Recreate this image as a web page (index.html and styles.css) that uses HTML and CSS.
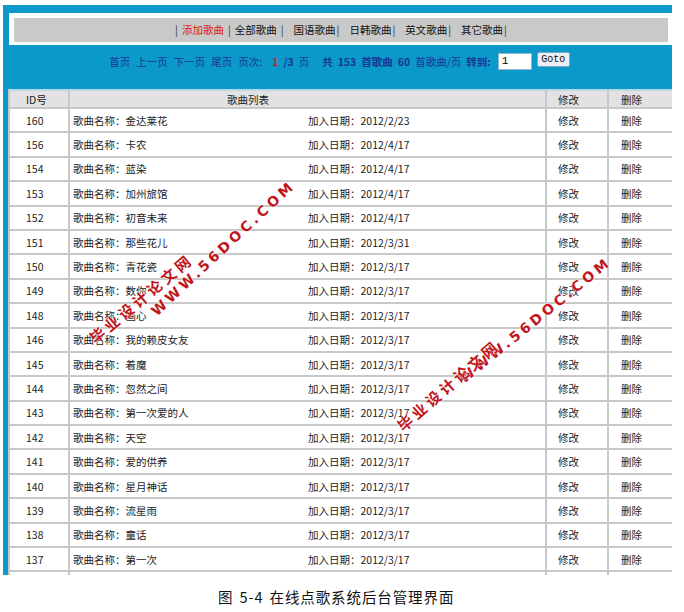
FILE: index.html
```html
<!DOCTYPE html>
<html lang="zh-CN">
<head>
<meta charset="utf-8">
<title>在线点歌系统后台管理界面</title>
<link rel="stylesheet" href="styles.css">
</head>
<body>
<div class="page">
  <div class="panel">
    <div class="topband">
      <div class="nav">
        <span class="bar">|</span><a class="item hot">添加歌曲</a><span class="bar">|</span><a class="item">全部歌曲</a><span class="bar">|</span><a class="item wide">国语歌曲</a><span class="bar">|</span><a class="item wide">日韩歌曲</a><span class="bar">|</span><a class="item wide">英文歌曲</a><span class="bar">|</span><a class="item wide">其它歌曲</a><span class="bar">|</span>
      </div>
    </div>
    <div class="pager">
      <span class="lnk">首页</span>
      <span class="lnk">上一页</span>
      <span class="lnk">下一页</span>
      <span class="lnk">尾页</span>
      <span class="lnk">页次:</span>
      <b class="red">1</b>
      <b class="tight">/3</b>
      <span class="tight">页</span>
      <b class="gap">共</b>
      <b>153</b>
      <b>首歌曲</b>
      <b>60</b>
      <span>首歌曲/页</span>
      <b>转到:</b>
      <span class="inp">1</span>
      <span class="btn">Goto</span>
    </div>
    <table class="songs">
      <colgroup><col class="c-id"><col class="c-song"><col class="c-edit"><col class="c-del"></colgroup>
      <tr class="head"><td class="id">ID号</td><td class="hsong">歌曲列表</td><td class="op">修改</td><td class="op2">删除</td></tr>
      <tr><td class="id">160</td><td><div class="song"><span class="name">歌曲名称：金达莱花</span><span class="date">加入日期：2012/2/23</span></div></td><td class="op">修改</td><td class="op2">删除</td></tr>
      <tr><td class="id">156</td><td><div class="song"><span class="name">歌曲名称：卡农</span><span class="date">加入日期：2012/4/17</span></div></td><td class="op">修改</td><td class="op2">删除</td></tr>
      <tr><td class="id">154</td><td><div class="song"><span class="name">歌曲名称：蓝染</span><span class="date">加入日期：2012/4/17</span></div></td><td class="op">修改</td><td class="op2">删除</td></tr>
      <tr><td class="id">153</td><td><div class="song"><span class="name">歌曲名称：加州旅馆</span><span class="date">加入日期：2012/4/17</span></div></td><td class="op">修改</td><td class="op2">删除</td></tr>
      <tr><td class="id">152</td><td><div class="song"><span class="name">歌曲名称：初音未来</span><span class="date">加入日期：2012/4/17</span></div></td><td class="op">修改</td><td class="op2">删除</td></tr>
      <tr><td class="id">151</td><td><div class="song"><span class="name">歌曲名称：那些花儿</span><span class="date">加入日期：2012/3/31</span></div></td><td class="op">修改</td><td class="op2">删除</td></tr>
      <tr><td class="id">150</td><td><div class="song"><span class="name">歌曲名称：青花瓷</span><span class="date">加入日期：2012/3/17</span></div></td><td class="op">修改</td><td class="op2">删除</td></tr>
      <tr><td class="id">149</td><td><div class="song"><span class="name">歌曲名称：数你</span><span class="date">加入日期：2012/3/17</span></div></td><td class="op">修改</td><td class="op2">删除</td></tr>
      <tr><td class="id">148</td><td><div class="song"><span class="name">歌曲名称：画心</span><span class="date">加入日期：2012/3/17</span></div></td><td class="op">修改</td><td class="op2">删除</td></tr>
      <tr><td class="id">146</td><td><div class="song"><span class="name">歌曲名称：我的赖皮女友</span><span class="date">加入日期：2012/3/17</span></div></td><td class="op">修改</td><td class="op2">删除</td></tr>
      <tr><td class="id">145</td><td><div class="song"><span class="name">歌曲名称：着魔</span><span class="date">加入日期：2012/3/17</span></div></td><td class="op">修改</td><td class="op2">删除</td></tr>
      <tr><td class="id">144</td><td><div class="song"><span class="name">歌曲名称：忽然之间</span><span class="date">加入日期：2012/3/17</span></div></td><td class="op">修改</td><td class="op2">删除</td></tr>
      <tr><td class="id">143</td><td><div class="song"><span class="name">歌曲名称：第一次爱的人</span><span class="date">加入日期：2012/3/17</span></div></td><td class="op">修改</td><td class="op2">删除</td></tr>
      <tr><td class="id">142</td><td><div class="song"><span class="name">歌曲名称：天空</span><span class="date">加入日期：2012/3/17</span></div></td><td class="op">修改</td><td class="op2">删除</td></tr>
      <tr><td class="id">141</td><td><div class="song"><span class="name">歌曲名称：爱的供养</span><span class="date">加入日期：2012/3/17</span></div></td><td class="op">修改</td><td class="op2">删除</td></tr>
      <tr><td class="id">140</td><td><div class="song"><span class="name">歌曲名称：星月神话</span><span class="date">加入日期：2012/3/17</span></div></td><td class="op">修改</td><td class="op2">删除</td></tr>
      <tr><td class="id">139</td><td><div class="song"><span class="name">歌曲名称：流星雨</span><span class="date">加入日期：2012/3/17</span></div></td><td class="op">修改</td><td class="op2">删除</td></tr>
      <tr><td class="id">138</td><td><div class="song"><span class="name">歌曲名称：童话</span><span class="date">加入日期：2012/3/17</span></div></td><td class="op">修改</td><td class="op2">删除</td></tr>
      <tr><td class="id">137</td><td><div class="song"><span class="name">歌曲名称：第一次</span><span class="date">加入日期：2012/3/17</span></div></td><td class="op">修改</td><td class="op2">删除</td></tr>
      <tr><td></td><td></td><td></td><td></td></tr>
    </table>
  </div>
  <p class="caption">图 5-4 在线点歌系统后台管理界面</p>
  <div class="wm wm-en wm1">WWW.56DOC.COM</div>
  <div class="wm wm-cn wm2">毕业设计论文网</div>
  <div class="wm wm-en wm3">WWW.56DOC.COM</div>
  <div class="wm wm-cn wm4">毕业设计论文网</div>
</div>
</body>
</html>
```

FILE: styles.css
```css
html, body {
  margin: 0;
  padding: 0;
  background: #ffffff;
}
body {
  font-family: "Noto Sans CJK SC", "Noto Sans", sans-serif;
  font-size: 10.5px;
  color: #222;
}
.page {
  position: relative;
  width: 684px;
  height: 612px;
  padding-top: 5px;
  box-sizing: border-box;
  overflow: hidden;
}
.panel {
  margin-left: 3px;
  width: 669px;
  height: 570px;
  background: #0b99ca;
  overflow: hidden;
  padding-top: 8px;
  box-sizing: border-box;
}
.topband {
  margin-left: 6px;
  background: #ffffff;
  padding: 5px 4px 3px 5px;
}
.nav {
  height: 24px;
  background: #c9c9c9;
  display: flex;
  align-items: center;
  justify-content: center;
  color: #111;
  line-height: 1;
}
.bar {
  margin: 0 4px;
  color: #333;
}
.item { color: #111; }
.item.hot { color: #e0161b; }
.item.wide { margin-left: 6px; margin-right: -3px; }

.pager {
  height: 44px;
  display: flex;
  align-items: center;
  justify-content: center;
  padding-bottom: 12px;
  box-sizing: border-box;
  color: #1a3592;
  white-space: nowrap;
  gap: 5px;
  padding-left: 4px;
}
.pager b { font-weight: bold; }
.pager .lnk { margin-right: 1px; }
.pager .red { color: #d51818; margin-left: 4px; }
.pager .gap { margin-left: 8px; }
.inp {
  width: 34px;
  height: 17px;
  box-sizing: border-box;
  background: #fff;
  border: 1px solid #8fb8d0;
  color: #000;
  font-family: "Liberation Mono", monospace;
  font-size: 11px;
  line-height: 15px;
  padding-left: 3px;
  margin-left: 2px;
}
.btn {
  width: 33px;
  height: 15px;
  box-sizing: border-box;
  background: #e9eff5;
  border: 1px solid #7fa9c4;
  border-radius: 2px;
  color: #111;
  font-family: "Liberation Mono", monospace;
  font-size: 10px;
  line-height: 13px;
  text-align: center;
  margin-top: -3px;
}

.songs {
  margin-left: 5px;
  width: 665px;
  border-collapse: collapse;
  table-layout: fixed;
  background: #ffffff;
}
.c-id { width: 60px; }
.c-song { width: 477px; }
.c-edit { width: 62px; }
.c-del { width: 66px; }
.songs td {
  border: 2px solid #c8c8c8;
  height: 24.4px;
  padding: 0;
  box-sizing: border-box;
  vertical-align: middle;
  white-space: nowrap;
  overflow: hidden;
  color: #222;
}
.songs tr.head td {
  height: 18px;
  background: #e2e2e2;
  border-top-color: #b8d7e6;
}
.songs td.id { padding-left: 16px; }
.songs td.hsong { padding-left: 157px; }
.songs td.op { padding-left: 11px; }
.songs td.op2 { padding-left: 12px; }
.song {
  display: flex;
  padding-left: 3px;
}
.name { width: 235px; }

.caption {
  margin: 12px 0 0;
  padding-left: 218px;
  font-size: 14.5px;
  line-height: 20px;
  color: #111;
  letter-spacing: 0.9px;
  word-spacing: 2px;
}

.wm {
  position: absolute;
  white-space: nowrap;
  color: #c0151b;
  font-weight: bold;
  text-shadow: 0 0 1px #fff, 0 0 2px #fff;
  transform: translate(-50%, -50%) rotate(-43deg);
}
.wm-en {
  font-family: "DejaVu Sans", sans-serif;
  font-size: 14px;
  letter-spacing: 3.5px;
}
.wm-cn {
  font-family: "Noto Sans CJK SC", sans-serif;
  font-size: 15px;
  letter-spacing: 3.5px;
}
.wm1 { left: 223px; top: 248px; }
.wm2 { left: 141px; top: 298px; transform: translate(-50%, -50%) rotate(-40deg); }
.wm3 { left: 535px; top: 320px; transform: translate(-50%, -50%) rotate(-39deg); }
.wm4 { left: 448px; top: 385px; transform: translate(-50%, -50%) rotate(-41deg); }
```
